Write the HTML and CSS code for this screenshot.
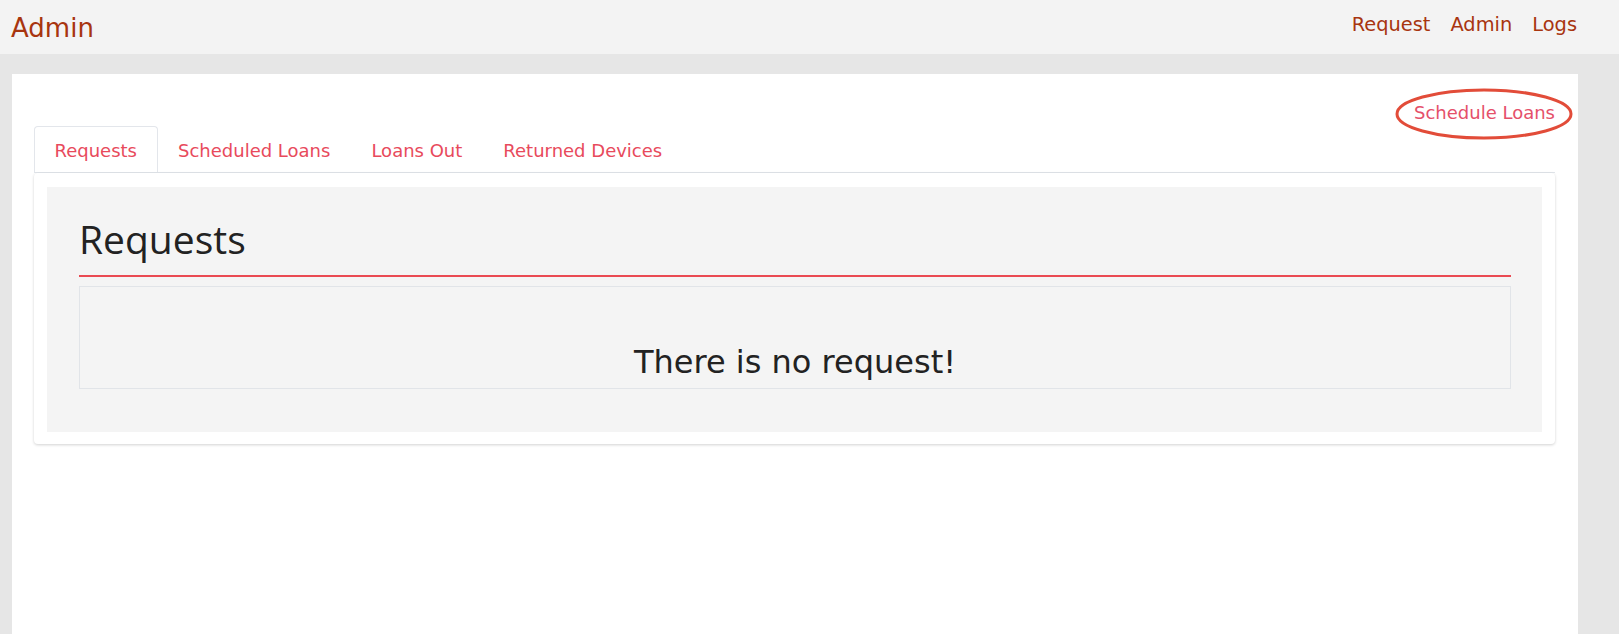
FILE: index.html
```html
<!DOCTYPE html>
<html lang="en">
<head>
<meta charset="utf-8">
<title>Admin</title>
<link rel="stylesheet" href="styles.css">
</head>
<body>
<header class="topbar">
  <a class="brand" href="#">Admin</a>
  <nav class="topnav">
    <a href="#">Request</a>
    <a href="#">Admin</a>
    <a href="#">Logs</a>
  </nav>
</header>
<main class="page">
  <div class="actions">
    <span class="action-wrap">
      <a class="action-link" href="#">Schedule Loans</a>
      <svg class="circle-mark" width="178" height="52" viewBox="0 0 178 52" aria-hidden="true">
        <ellipse cx="89" cy="26" rx="87" ry="24" fill="none" stroke="#e24c39" stroke-width="3"/>
      </svg>
    </span>
  </div>
  <ul class="tabs">
    <li class="tab active"><a href="#">Requests</a></li>
    <li class="tab"><a href="#">Scheduled Loans</a></li>
    <li class="tab"><a href="#">Loans Out</a></li>
    <li class="tab"><a href="#">Returned Devices</a></li>
  </ul>
  <section class="card">
    <div class="panel">
      <h2 class="panel-title">Requests</h2>
      <div class="empty-box">
        <h3 class="empty-text">There is no request!</h3>
      </div>
    </div>
  </section>
</main>
</body>
</html>
```
FILE: styles.css
```css
* { box-sizing: border-box; }
html, body { margin: 0; padding: 0; }
body {
  background: #e6e6e6;
  font-family: "DejaVu Sans", Verdana, sans-serif;
  color: #222;
  height: 634px;
  overflow: hidden;
}
a { text-decoration: none; }

.topbar {
  height: 54px;
  background: #f3f3f3;
  display: flex;
  justify-content: space-between;
  align-items: flex-start;
  padding: 13px 42px 0 11px;
}
.brand {
  font-size: 26px;
  line-height: 1.2;
  color: #a8350f;
}
.topnav {
  display: flex;
  gap: 20px;
}
.topnav a {
  font-size: 19.4px;
  line-height: 1.2;
  color: #a8350f;
}

.page {
  background: #fff;
  margin: 20px 41px 0 12px;
  height: 560px;
  padding: 25px 23px 0 22px;
}

.actions {
  text-align: right;
  font-size: 18px;
  line-height: 27px;
  height: 27px;
}
.action-wrap {
  position: relative;
  display: inline-block;
}
.action-link {
  color: #e5506a;
}
.circle-mark {
  position: absolute;
  left: -19px;
  top: -11px;
}

.tabs {
  list-style: none;
  margin: 0;
  padding: 0;
  display: flex;
  border-bottom: 1px solid #e1e5ea;
}
.tab a {
  display: block;
  font-size: 18px;
  line-height: 27px;
  padding: 10px 19.5px 8px;
  color: #e84a5c;
  border: 1px solid transparent;
  border-bottom: 0;
  border-radius: 4px 4px 0 0;
}
.tab.active a {
  border-color: #e3e6eb;
  background: #fff;
}

.card {
  background: #fff;
  border-radius: 4px;
  box-shadow: 0 1px 3px rgba(0, 0, 0, 0.18);
  padding: 14px 13px 12px 13px;
}
.panel {
  background: #f4f4f4;
  padding: 29px 31px 43px 32px;
}
.panel-title {
  margin: 0 0 9px;
  font-family: "Open Sans", "Noto Sans", sans-serif;
  font-weight: 400;
  font-size: 39px;
  line-height: 46px;
  padding-bottom: 13px;
  border-bottom: 2px solid #ea4a52;
  color: #222;
}
.empty-box {
  border: 1px solid #e1e4e8;
  padding: 56px 0 7px;
  text-align: center;
}
.empty-text {
  margin: 0;
  font-weight: 400;
  font-size: 32px;
  line-height: 38px;
  color: #222;
}
```
